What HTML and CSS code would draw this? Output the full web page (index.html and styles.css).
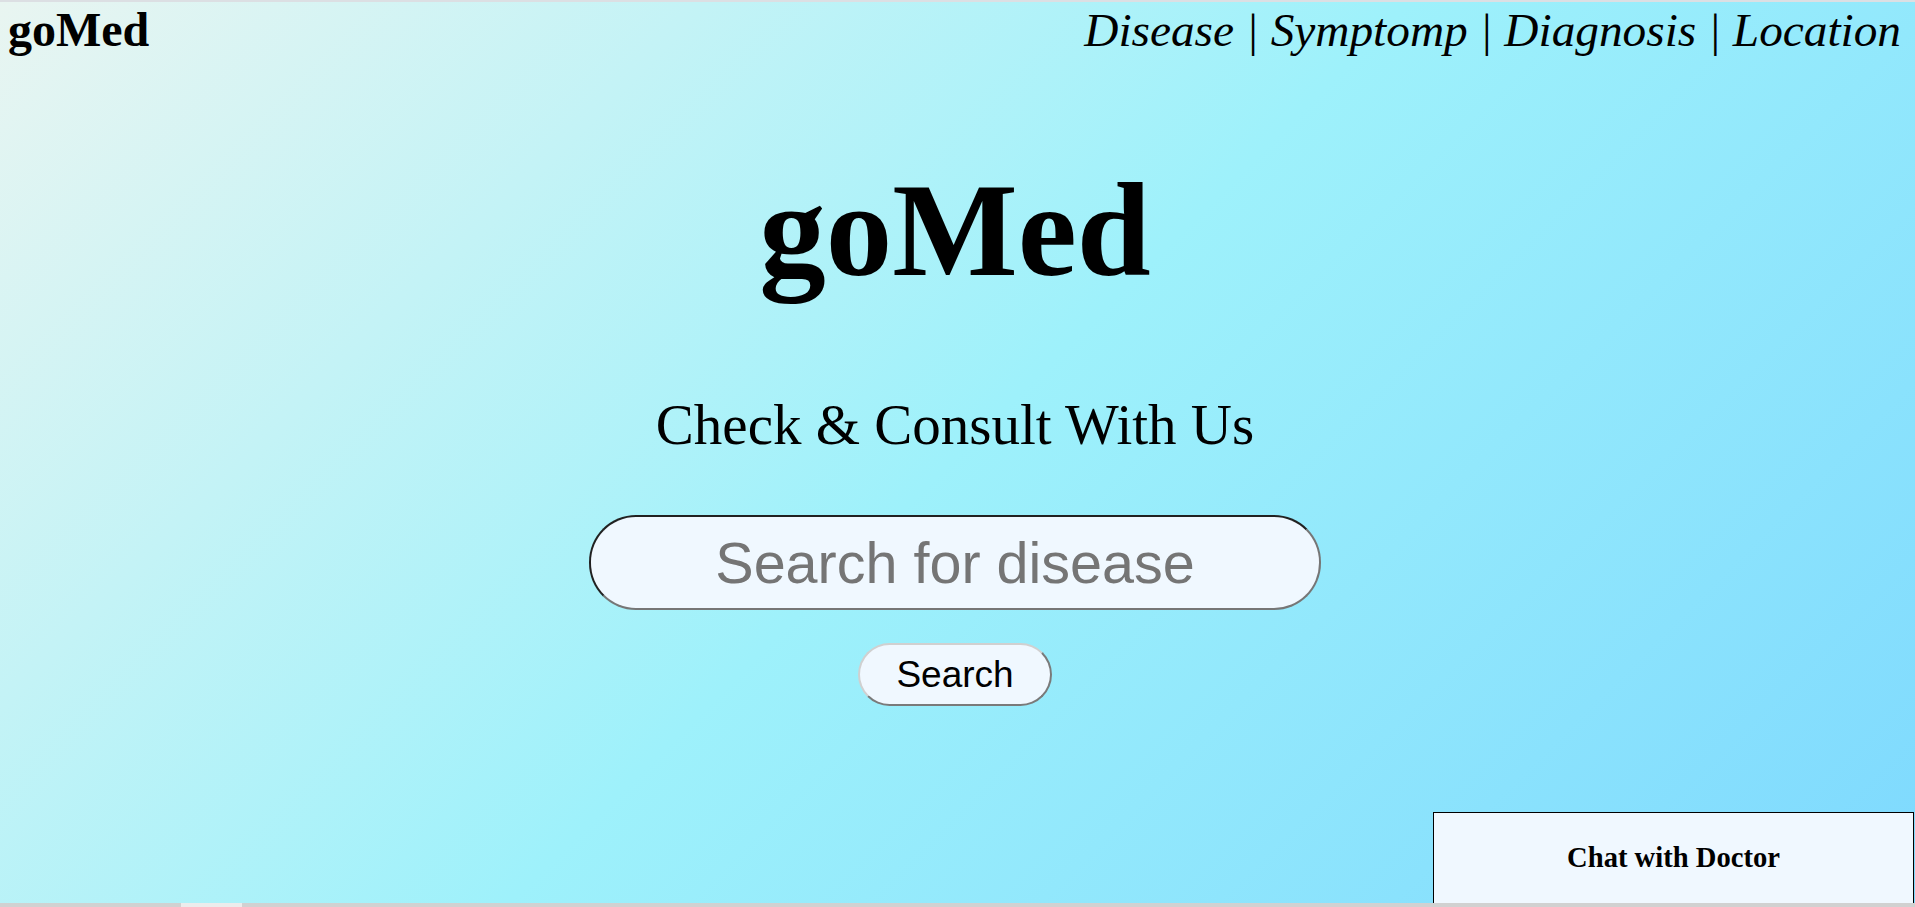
FILE: index.html
```html
<!DOCTYPE html>
<html lang="en">
<head>
<meta charset="utf-8">
<title>goMed</title>
<link rel="stylesheet" href="styles.css">
</head>
<body>
<div class="topbar"></div>
<header class="header">
  <div class="logo">goMed</div>
  <nav class="nav">Disease | Symptomp | Diagnosis | Location</nav>
</header>
<main class="hero">
  <h1 class="title">goMed</h1>
  <p class="tagline">Check &amp; Consult With Us</p>
  <input class="search" type="text" placeholder="Search for disease">
  <button class="btn" type="button">Search</button>
</main>
<aside class="chat"><h3 class="chat-title">Chat with Doctor</h3></aside>
<div class="hscroll"><div class="hscroll-thumb"></div></div>
</body>
</html>
```

FILE: styles.css
```css
html, body {
  margin: 0;
  padding: 0;
  height: 100%;
}
body {
  min-height: 100vh;
  overflow: hidden;
  background: linear-gradient(135deg, #e9f5f1 0%, #9ef1fb 50%, #7ed9fe 100%);
  font-family: "Liberation Serif", "Times New Roman", serif;
  color: #000;
}
.topbar {
  height: 2px;
  background: #dcdfe3;
}
.header {
  display: flex;
  justify-content: space-between;
  align-items: baseline;
  padding: 0 14px 0 8px;
}
.logo {
  font-size: 48px;
  font-weight: bold;
  line-height: normal;
}
.nav {
  font-size: 47.3px;
  font-style: italic;
  line-height: normal;
}
.hero {
  display: flex;
  flex-direction: column;
  align-items: center;
  padding-right: 5px;
}
.title {
  margin: 96px 0 0;
  font-size: 133px;
  font-weight: bold;
  line-height: normal;
}
.tagline {
  margin: 85px 0 0;
  font-size: 57px;
  line-height: normal;
}
.search {
  box-sizing: border-box;
  margin-top: 58px;
  width: 732px;
  height: 95px;
  padding: 0 40px;
  border: 2px inset #767676;
  border-radius: 47px;
  background: #f0f8ff;
  font-family: "Liberation Sans", Arial, sans-serif;
  font-size: 57.5px;
  text-align: center;
  color: #000;
  outline: none;
}
.search::placeholder {
  color: #757575;
}
.btn {
  margin-top: 33px;
  padding: 8.5px 36px;
  border-width: 2px;
  border-style: solid;
  border-color: #d0d0d0 #7a7a7a #7a7a7a #d0d0d0;
  border-radius: 32px;
  background: #f0f8ff;
  font-family: "Liberation Sans", Arial, sans-serif;
  font-size: 37px;
  line-height: normal;
  color: #000;
}
.chat {
  position: fixed;
  right: 1px;
  bottom: 0;
  box-sizing: border-box;
  width: 481px;
  height: 95px;
  border: 1px solid #000;
  background: #f0f8ff;
  text-align: center;
}
.chat-title {
  margin: 29px 0 0;
  font-size: 28.6px;
  font-weight: bold;
  line-height: normal;
}
.hscroll {
  position: fixed;
  left: 0;
  right: 0;
  bottom: 0;
  height: 4px;
  background: #d1d1d1;
}
.hscroll-thumb {
  margin-left: 181px;
  width: 61px;
  height: 100%;
  background: #ececec;
}
```
